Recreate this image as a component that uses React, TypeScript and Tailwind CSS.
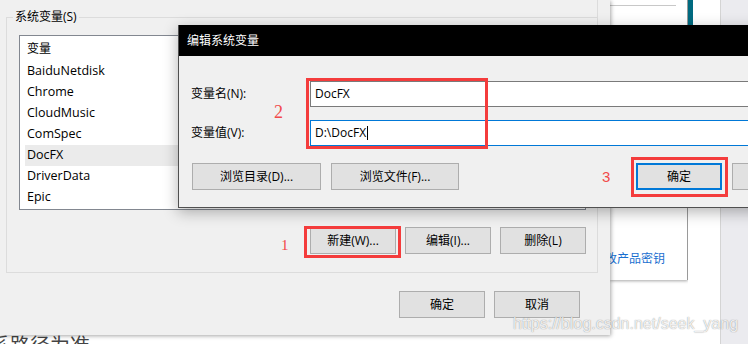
const rows = ['BaiduNetdisk', 'Chrome', 'CloudMusic', 'ComSpec', 'DocFX', 'DriverData', 'Epic'];

function WinButton({
  label,
  className = '',
  focused = false,
}: {
  label: string;
  className?: string;
  focused?: boolean;
}) {
  const edge = focused ? 'border-2 border-[#0078d7]' : 'border border-[#adadad]';
  return (
    <div
      className={`flex h-[27px] shrink-0 items-center justify-center bg-[#e1e1e1] text-[12px] leading-none ${edge} ${className}`}
    >
      {label}
    </div>
  );
}

export default function App() {
  return (
    <div className="relative flex h-[344px] w-[748px] overflow-hidden bg-white font-['Open_Sans','Noto_Sans_CJK_SC',sans-serif] text-[12px] text-black">
      {/* back dialog: 环境变量 */}
      <div className="flex w-[610px] shrink-0 flex-col">
        <div className="relative z-10 flex h-[335px] shrink-0 flex-col bg-[#f0f0f0] shadow-[1px_1px_4px_rgba(0,0,0,0.35)]">
          <div className="mr-[12px] h-[17px] shrink-0 border-r border-[#dcdcdc]" />
          <div className="relative ml-[6px] mr-[12px] h-[256px] shrink-0 border border-[#dcdcdc] pl-[12px] pr-[11px] pt-[17px]">
            <span className="absolute -top-[9px] left-[6px] bg-[#f0f0f0] px-[2px] leading-[16px]">系统变量(S)</span>
            <div className="h-[175px] w-[567px] border border-[#828790] bg-white pl-[5px]">
              <div className="flex h-[25px] items-center pl-[2px]">变量</div>
              {rows.map(r => (
                <div
                  key={r}
                  className={`flex h-[21px] items-center pl-[2px] text-[12.5px] ${r === 'DocFX' ? 'bg-[#ebebeb]' : ''}`}
                >
                  {r}
                </div>
              ))}
            </div>
            <div className="mt-[17px] flex justify-end gap-[9px]">
              <WinButton label="新建(W)..." className="w-[86px]" />
              <WinButton label="编辑(I)..." className="w-[86px]" />
              <WinButton label="删除(L)" className="w-[86px]" />
            </div>
          </div>
          <div className="mt-[18px] flex justify-end gap-[9px] pr-[30px]">
            <WinButton label="确定" className="w-[86px]" />
            <WinButton label="取消" className="w-[86px]" />
          </div>
        </div>
        <div className="-ml-[10px] shrink-0 whitespace-nowrap text-[20px] leading-[22px] text-[#444]">系路径为准</div>
      </div>

      {/* windows behind, right side */}
      <div className="flex flex-1">
        <div className="flex h-[280px] w-[78px] shrink-0 flex-col overflow-hidden border-r border-[#9a9a9a] bg-white shadow-[0_1px_3px_rgba(0,0,0,0.35)]">
          <div className="mt-[5px] h-px w-[66px] shrink-0 bg-[#c8c8c8]" />
          <div className="-ml-[5px] mt-[245px] whitespace-nowrap leading-[16px] text-[#1a6fd0]">改产品密钥</div>
        </div>
        <div className="w-[32px] shrink-0 bg-white">
          <div className="h-[25px] w-[5px] bg-[#006a80]" />
        </div>
        <div className="flex-1 border-l border-[#d4d4d4] bg-[#ebebef]" />
      </div>

      {/* 编辑系统变量 dialog */}
      <div className="absolute left-[178px] top-[25px] z-20 flex h-[183px] w-[680px] flex-col border-b border-l border-[#505050] bg-[#f0f0f0] shadow-[0_4px_14px_rgba(0,0,0,0.3)]">
        <div className="flex h-[31px] shrink-0 items-center bg-black pl-[8px] text-white">编辑系统变量</div>
        <div className="flex flex-col pl-[12px] pt-[25px]">
          <div className="flex items-center">
            <span className="w-[119px] shrink-0">变量名(N):</span>
            <div className="flex h-[26px] flex-1 items-center border border-[#7a7a7a] bg-white pl-[4px]">DocFX</div>
          </div>
          <div className="mt-[13px] flex items-center">
            <span className="w-[119px] shrink-0">变量值(V):</span>
            <div className="flex h-[26px] flex-1 items-center border border-[#0078d7] bg-white pl-[4px]">
              D:\DocFX
              <span className="ml-[1px] h-[14px] w-px bg-black" />
            </div>
          </div>
          <div className="mt-[17px] flex items-center">
            <WinButton label="浏览目录(D)..." className="ml-px w-[129px]" />
            <WinButton label="浏览文件(F)..." className="ml-[10px] w-[128px]" />
            <WinButton label="确定" focused className="ml-[177px] w-[86px]" />
            <WinButton label="取消" className="ml-[10px] w-[86px]" />
          </div>
        </div>
      </div>

      {/* annotations */}
      <div className="absolute left-[306px] top-[78px] z-30 h-[71px] w-[182px] border-[3px] border-[#f43c3c]" />
      <div className="absolute left-[631px] top-[157px] z-30 h-[40px] w-[97px] border-[3px] border-[#f43c3c]" />
      <div className="absolute left-[304px] top-[226px] z-30 h-[32px] w-[97px] border-[3px] border-[#f43c3c]" />
      <div className="absolute left-[274px] top-[103px] z-30 font-['Liberation_Serif',serif] text-[18px] leading-none text-[#f24a4a]">2</div>
      <div className="absolute left-[281px] top-[238px] z-30 font-['Liberation_Serif',serif] text-[15px] leading-none text-[#f24a4a]">1</div>
      <div className="absolute left-[602px] top-[169px] z-30 font-['Liberation_Sans',sans-serif] text-[15px] leading-none text-[#f24a4a]">3</div>

      {/* watermark */}
      <div className="absolute left-[513px] top-[316px] z-40 whitespace-nowrap font-['Liberation_Sans',sans-serif] text-[16px] leading-none text-white/85 [text-shadow:0_0_1px_rgba(0,0,0,0.5)]">
        https://blog.csdn.net/seek_yang
      </div>
    </div>
  );
}
